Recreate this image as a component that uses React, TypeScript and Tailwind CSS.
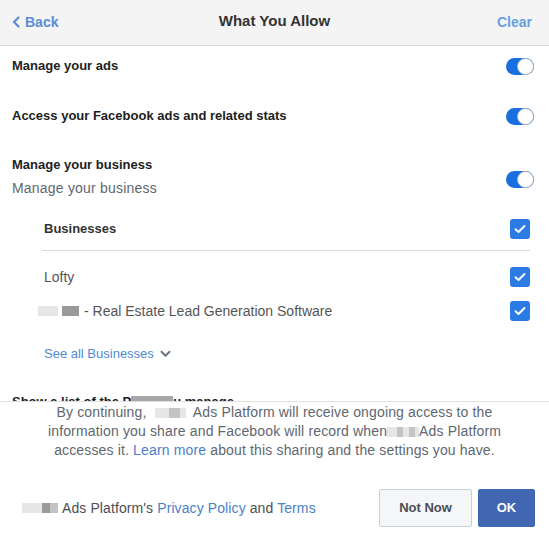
import React from 'react';

const font = { fontFamily: '"Liberation Sans", Arial, sans-serif' };

function Toggle() {
    return (
        <div className="relative w-[28px] h-[17px] rounded-full bg-[#1a6fe0] shrink-0">
            <div className="absolute right-0 top-0 w-[17px] h-[17px] rounded-full bg-white border border-[#a9b3c2]" />
        </div>
    );
}

function Check() {
    return (
        <div className="w-[20px] h-[20px] rounded-[3px] bg-[#2a7be4] flex items-center justify-center shrink-0">
            <svg width="12" height="10" viewBox="0 0 12 10" fill="none">
                <path d="M1.5 5.2 L4.5 8 L10.5 2" stroke="white" strokeWidth="2" strokeLinecap="round" strokeLinejoin="round" />
            </svg>
        </div>
    );
}

function Blur({ w, tone = 'light' }: { w: string; tone?: 'light' | 'mid' | 'dark' }) {
    const c = tone === 'light' ? 'bg-[#e6e6e6]' : tone === 'mid' ? 'bg-[#c4c4c4]' : 'bg-[#9a9a9a]';
    return <span className={`inline-block align-middle h-[10px] ${w} ${c}`} />;
}

export default function App() {
    return (
        <div className="w-[549px] h-[536px] flex flex-col bg-white overflow-hidden text-[#1c1e21]" style={font}>
            {/* header */}
            <div className="h-[46px] shrink-0 bg-[#f4f4f4] border-b border-[#d8d8d8] flex items-center px-[12px] relative">
                <div className="flex items-center gap-[5px] text-[#5b8dd6] font-bold text-[14px] mt-[-1px]">
                    <svg width="8" height="12" viewBox="0 0 8 12" fill="none">
                        <path d="M6.5 1.5 L2 6 L6.5 10.5" stroke="#5b8dd6" strokeWidth="2.2" strokeLinecap="round" strokeLinejoin="round" />
                    </svg>
                    <span>Back</span>
                </div>
                <div className="absolute left-0 right-0 text-center font-bold text-[15px] text-[#333] mt-[-2px] pointer-events-none">What You Allow</div>
                <div className="ml-auto mr-[5px] text-[14px] font-bold text-[#6a9fe0] mt-[-1px]">Clear</div>
            </div>

            {/* scroll area */}
            <div className="flex-1 overflow-hidden">
                <div className="pl-[12px] pr-[15px] pt-[10px]">
                    <div className="flex items-center justify-between h-[20px]">
                        <span className="text-[13px] font-bold">Manage your ads</span>
                        <Toggle />
                    </div>
                    <div className="flex items-center justify-between h-[20px] mt-[30px]">
                        <span className="text-[13px] font-bold">Access your Facebook ads and related stats</span>
                        <Toggle />
                    </div>
                    <div className="flex items-center justify-between mt-[29px]">
                        <div className="flex flex-col">
                            <span className="text-[13px] font-bold leading-[20px]">Manage your business</span>
                            <span className="text-[14px] tracking-[0.2px] text-[#606770] leading-[20px] mt-[3px]">Manage your business</span>
                        </div>
                        <div className="mt-[6px]"><Toggle /></div>
                    </div>
                </div>

                <div className="ml-[42px] mr-[19px] mt-[21px]">
                    <div className="flex items-center justify-between h-[20px] pl-[2px]">
                        <span className="text-[13px] font-bold text-[#333]">Businesses</span>
                        <Check />
                    </div>
                    <div className="h-px bg-[#dcdcdc] mt-[11px]" />
                    <div className="flex items-center justify-between h-[20px] pl-[2px] mt-[16px]">
                        <span className="text-[14px] text-[#555]">Lofty</span>
                        <Check />
                    </div>
                    <div className="flex items-center justify-between h-[20px] mt-[14px]">
                        <span className="text-[14px] text-[#555] ml-[-4px] flex items-center">
                            <Blur w="w-[20px]" tone="light" />
                            <span className="inline-block w-[4px]" />
                            <Blur w="w-[17px]" tone="dark" />
                            <span className="ml-[5px]">- Real Estate Lead Generation Software</span>
                        </span>
                        <Check />
                    </div>
                    <div className="flex items-center gap-[6px] h-[20px] mt-[23px] pl-[2px] text-[13px] text-[#4d8ad4]">
                        <span>See all Businesses</span>
                        <svg width="11" height="8" viewBox="0 0 11 8" fill="none">
                            <path d="M1.5 1.8 L5.5 5.8 L9.5 1.8" stroke="#6b7587" strokeWidth="2" strokeLinecap="round" strokeLinejoin="round" />
                        </svg>
                    </div>
                </div>

                <div className="pl-[12px] mt-[28px] flex items-center h-[20px] text-[13px] font-bold">
                    <span>Show a list of the P</span>
                    <span className="inline-block w-[42px] h-[12px] bg-[#a8a8a8]" />
                    <span>u manage</span>
                </div>
            </div>

            {/* footer */}
            <div className="h-[135px] shrink-0 border-t border-[#e0e0e0] bg-white flex flex-col">
                <div className="text-center text-[14px] tracking-[0.15px] leading-[19px] text-[#606770] pt-[1px]">
                    <div>
                        By continuing,{' '}
                        <span className="inline-flex align-middle mx-[4px]">
                            <Blur w="w-[14px]" tone="light" />
                            <Blur w="w-[11px]" tone="mid" />
                            <Blur w="w-[6px]" tone="light" />
                        </span>{' '}
                        Ads Platform will receive ongoing access to the
                    </div>
                    <div>
                        information you share and Facebook will record when
                        <span className="inline-flex align-middle">
                            <Blur w="w-[10px]" tone="light" />
                            <Blur w="w-[6px]" tone="mid" />
                            <Blur w="w-[6px]" tone="light" />
                            <Blur w="w-[6px]" tone="mid" />
                            <Blur w="w-[4px]" tone="light" />
                        </span>
                        Ads Platform
                    </div>
                    <div>
                        accesses it. <span className="text-[#4a80c8]">Learn more</span> about this sharing and the settings you have.
                    </div>
                </div>
                <div className="mt-auto mb-[9px] flex items-center pl-[22px] pr-[14px]">
                    <div className="flex items-center text-[14px] tracking-[0.1px] text-[#4b4f56]">
                        <span className="inline-flex">
                            <Blur w="w-[20px]" tone="light" />
                            <Blur w="w-[8px]" tone="dark" />
                            <Blur w="w-[8px]" tone="mid" />
                        </span>
                        <span className="ml-[4px]">
                            Ads Platform's <span className="text-[#4a80c8]">Privacy Policy</span> and <span className="text-[#4a80c8]">Terms</span>
                        </span>
                    </div>
                    <div className="ml-auto flex gap-[6px]">
                        <button className="w-[93px] h-[38px] rounded-[2px] bg-[#f5f6f7] border border-[#ccd0d5] text-[13px] font-bold text-[#4b4f56]">
                            Not Now
                        </button>
                        <button className="w-[57px] h-[38px] rounded-[2px] bg-[#4267b2] text-[13px] font-bold text-white">
                            OK
                        </button>
                    </div>
                </div>
            </div>
        </div>
    );
}
